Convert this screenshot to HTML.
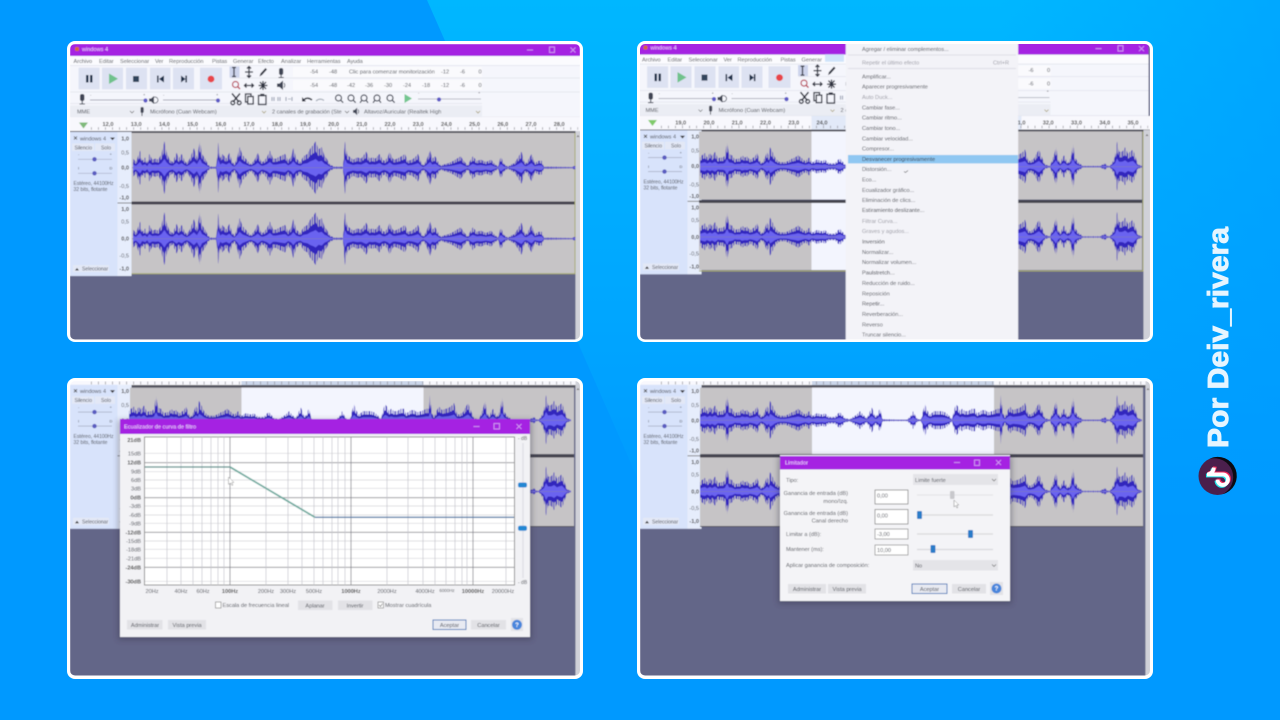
<!DOCTYPE html>
<html><head><meta charset="utf-8"><title>Audacity</title>
<style>
html,body{margin:0;padding:0;width:1280px;height:720px;overflow:hidden;background:#0099ff}
svg{display:block}
text{font-family:"Liberation Sans",sans-serif;font-size:5.6px;fill:#4d5058}
.g{fill:#9a9aa4}.d{fill:#33363f}.b{font-weight:bold;fill:#444}
.w{fill:#f3d9ff}
.s{fill:none;stroke:#2f3340;stroke-width:1.3}
</style></head><body>
<svg width="1280" height="720" viewBox="0 0 1280 720" xmlns="http://www.w3.org/2000/svg">
<defs>
<linearGradient id="bg" gradientUnits="userSpaceOnUse" x1="0" y1="0" x2="0" y2="520"><stop offset="0" stop-color="#00b7ff"/><stop offset=".6" stop-color="#00a6ff"/><stop offset="1" stop-color="#0099ff"/></linearGradient>
<linearGradient id="bg2" gradientUnits="userSpaceOnUse" x1="1000" y1="0" x2="1280" y2="0"><stop offset="0" stop-color="#0099ff" stop-opacity="0"/><stop offset="1" stop-color="#0099ff" stop-opacity=".5"/></linearGradient>
<filter id="b" x="0" y="0" width="1" height="1"><feGaussianBlur stdDeviation=".42"/></filter>
<filter id="sh" x="-10%" y="-10%" width="120%" height="120%"><feGaussianBlur stdDeviation="3"/></filter>
<clipPath id="c1"><rect x="70" y="44" width="510" height="295.500" rx="5"/></clipPath>
<clipPath id="c2"><rect x="640" y="44" width="510" height="295.500" rx="5"/></clipPath>
<clipPath id="c3"><rect x="70" y="381" width="510" height="294.500" rx="5"/></clipPath>
<clipPath id="c4"><rect x="640" y="381" width="510" height="294.500" rx="5"/></clipPath>
<pattern id="sp" patternUnits="userSpaceOnUse" x="0" y="0" width="17" height="100">
<path fill="#3325bd" d="M0 0h1.300v100H0zM2.400 0h.9v100h-.9zM4.500 0h1.600v100H4.500zM7.300 0h.8v100h-.8zM9.200 0h1.300v100H9.200zM11.700 0h.7v100h-.7zM13.400 0h1.500v100h-1.500zM15.900 0h.6v100h-.6z"/>
</pattern>

<path id="p1" transform="translate(60 0) scale(1.0142 1) translate(-60 0)" d="M132 0L132-8 135-5 137-10 139-15 141-6 144-9 146-4 148-12 151-7 154-8 157-7 160-12 163-23 165-14 168-7 171-5 175-13 177-8 180-12 183-6 185-4 188-8 192-17 195-9 198-23 200-12 203-8 206-3 208-1 214-1 216-22 218-8 220-12 224-8 227-13 230-5 232-3 235-10 237-18 240-11 243-8 246-5 248-3 252-7 255-13 258-6 260-5 264-9 267-15 270-8 273-8 277-10 282-12 285-6 288-10 290-17 293-8 297-5 300-10 304-12 307-17 310-20 312-23 315-16 318-18 321-10 323-8 326-3 330-1 339-1 341-23 343-12 345-10 349-7 353-9 357-8 362-14 365-8 368-9 371-8 375-12 378-7 380-6 383-9 385-14 388-8 390-7 395-9 400-12 403-6 407-7 410-9 413-12 416-5 418-2 421-6 425-15 427-8 430-10 433-5 435-2 439-3 443-4 448-6 455-10 458-6 462-2 465-7 467-10 471-6 475-7 480-5 485-7 489-3 492-1 494-8 495-9 498-3 502-1 505-3 508-4 511-8 515-14 518-5 520-4 523-9 525-12 528-4 532-6 535-6 537-1 565-.6 570-3 572 0Z"/>
<g id="W1">
<use href="#p1" fill="url(#sp)" transform="scale(1 1.15)"/><use href="#p1" fill="url(#sp)" transform="scale(1 -1.15)"/>
<use href="#p1" fill="#3325bd" transform="scale(1 .72)"/><use href="#p1" fill="#3325bd" transform="scale(1 -.72)"/>
<use href="#p1" fill="#6b64f0" transform="scale(1 .38)"/><use href="#p1" fill="#6b64f0" transform="scale(1 -.38)"/>
<rect x="132" y="-.4" width="444" height=".8" fill="#7a76c8"/>
</g>

<path id="p2" d="M700 0L700-8 702-10 705-12 707-8 710-12 712-9 715-13 718-7 720-8 723-8 725-10 727-21 729-11 732-10 735-6 737-7 740-7 742-10 745-8 747-9 750-6 752-7 755-9 757-12 760-5 762-3 765-8 767-13 769-9 770-17 773-12 775-8 778-5 780-4 785-4 788-5 792-7 795-8 798-10 801-8 805-5 807-6 809-8 811-5 813-4 816-6 818-6 822-5 825-6 829-3 832-3 835-3 838-6 840-7 843-4 845-2 850-1 853-3 855-4 858-6 860-8 864-4 867-2 870-8 872-11 875-4 877-4 879-9 880-10 882-3 883-1 897-.7 907-.7 911-4 913-8 916-3 918-1 921-1 923-8 925-14 927-9 930-5 934-8 938-8 942-8 945-7 948-5 950-3 952-1 954-9 956-14 958-12 960-8 962-10 965-8 968-8 972-10 975-10 977-6 979-7 982-9 985-9 988-7 992-8 995-9 997-10 1000-10 1001-22 1003-6 1005-3 1008-9 1010-12 1013-9 1017-10 1020-11 1023-13 1025-15 1028-6 1030-5 1034-7 1037-12 1039-15 1042-8 1045-2 1050-.7 1054-10 1056-17 1058-7 1060-3 1062-7 1064-10 1066-6 1068-3 1071-8 1073-20 1075-8 1078-4 1083-.7 1100-.7 1103-2 1105-3 1107-1 1110-.7 1113-5 1115-9 1117-22 1119-13 1122-13 1124-15 1125-17 1128-11 1130-13 1133-15 1136-7 1138-2 1142-.7 1142 0Z"/>
<g id="W2">
<use href="#p2" fill="url(#sp)" transform="scale(1 1.15)"/><use href="#p2" fill="url(#sp)" transform="scale(1 -1.1)"/>
<use href="#p2" fill="#3325bd" transform="scale(1 .72)"/><use href="#p2" fill="#3325bd" transform="scale(1 -.7)"/>
<use href="#p2" fill="#6b64f0" transform="scale(1 .38)"/><use href="#p2" fill="#6b64f0" transform="scale(1 -.38)"/>
<rect x="700" y="-.4" width="442" height=".8" fill="#7a76c8"/>
</g>

<g id="chrome">
<rect x="70" y="44" width="510" height="12" fill="#a521e2"/>
<rect x="75" y="47" width="4" height="4" rx="1" fill="#d8643c"/>
<text x="82" y="50.800" class="w">windows 4</text>
<path d="M527 50h6" stroke="#d9a8f2" stroke-width=".8"/><rect x="549.500" y="47" width="5" height="5.500" fill="none" stroke="#d9a8f2" stroke-width=".8"/><path d="M570.500 47.500l5 5m0-5l-5 5" stroke="#d9a8f2" stroke-width=".8"/>
<rect x="70" y="56" width="510" height="10" fill="#fbfbfe"/>
<text x="73.500" y="62.800">Archivo</text><text x="99" y="62.800">Editar</text><text x="120" y="62.800">Seleccionar</text><text x="155" y="62.800">Ver</text><text x="169" y="62.800">Reproducción</text><text x="212" y="62.800">Pistas</text><text x="233" y="62.800">Generar</text><text x="258" y="62.800">Efecto</text><text x="281" y="62.800">Analizar</text><text x="307" y="62.800">Herramientas</text><text x="347" y="62.800">Ayuda</text>
<rect x="70" y="65" width="510" height="52" fill="#f5f6fc"/>
<path d="M70 65.500H580M230 78H580M70 92H580M70 103.500H482M70 117H580" stroke="#e2e3ec" stroke-width=".7"/>
<g fill="#dde2f2"><rect x="78.600" y="67.700" width="21" height="21.600"/><rect x="102" y="67.700" width="21" height="21.600"/><rect x="126" y="67.700" width="21" height="21.600"/><rect x="150" y="67.700" width="20.500" height="21.600"/><rect x="173" y="67.700" width="21" height="21.600"/><rect x="200" y="67.700" width="22" height="21.600"/></g>
<path d="M86 75h2.500v7.500H86zM90 75h2.500v7.500H90z" fill="#1f2e48"/>
<path d="M109 73.500v10.500l9-5.200z" fill="#6fc28c"/>
<rect x="133" y="76" width="6" height="6" fill="#33445c"/>
<path d="M157 75.500h1.600v7H157zM164 75.500v7l-5-3.500z" fill="#1f2e48"/>
<path d="M187 75.500h-1.600v7h1.600zM181 75.500v7l4.500-3.500z" fill="#1f2e48"/>
<circle cx="211" cy="79" r="3.400" fill="#e84548"/>
<rect x="229.500" y="66.500" width="10" height="11" fill="#cdd4ec"/>
<path class="s" d="M232 67.500h4M232 76.500h4M234 67.500v9M249 66.500v11M245 72h8M247 68.500l2-2 2 2M247 75.500l2 2 2-2"/>
<path d="M259.500 76.500l1-3 5-5.500 1.500 1.500-5 5.500z" fill="#2f3340"/>
<circle cx="235.500" cy="84.500" r="3" fill="none" stroke="#b9485a" stroke-width="1.200"/><path d="M237.500 86.500l2.500 2.500" stroke="#b9485a" stroke-width="1.400"/>
<path class="s" d="M244.500 85.500h9M246.500 83.500l-2 2 2 2M251.500 83.500l2 2-2 2M263 81v9M258.500 85.500h9M260 82l6 7M266 82l-6 7"/>
<path d="M232 93.500l7 8.500M240 93.500l-7 8.500" fill="none" stroke="#2f3340" stroke-width="1.500"/><circle cx="232.800" cy="102.800" r="1.900" class="s"/><circle cx="239.200" cy="102.800" r="1.900" class="s"/>
<rect x="245.500" y="94" width="5.500" height="8" fill="none" stroke="#2f3340" stroke-width="1.300"/><rect x="247.800" y="96.500" width="5.400" height="7.500" fill="#f5f6fc" stroke="#2f3340" stroke-width="1.300"/>
<rect x="258.500" y="95.500" width="7.500" height="9" fill="none" stroke="#2f3340" stroke-width="1.300"/><rect x="260.300" y="93.800" width="4" height="2.400" fill="#2f3340"/>
<path d="M272 97v4M274 97v4M278 97v4M280 97v4M286 97v4M292 97v4" stroke="#9aa2b4" stroke-width="1.100"/><path d="M288 99h3" stroke="#b6bbc8"/>
<path d="M303 101q3.500-5 9-1" fill="none" stroke="#2f3340" stroke-width="1.600"/><path d="M302 97v4.500h4z" fill="#2f3340"/>
<path d="M316 101q4-3.500 8-.5" fill="none" stroke="#a6acb8" stroke-width="1.200"/>
<g fill="none" stroke="#3f4554" stroke-width="1.200"><circle cx="338.500" cy="98" r="3"/><path d="M340.700 100.200l2.500 2.500"/><circle cx="351" cy="98" r="3"/><path d="M353.200 100.200l2.500 2.500"/><circle cx="364" cy="98" r="3"/><path d="M362 100.200l-2 2.500M366 100.200l2 2.500"/><circle cx="377" cy="98" r="3"/><path d="M375 100.200l-2 2.500M379 100.200l2 2.500"/><circle cx="390" cy="98" r="3"/><path d="M392.200 100.200l2.500 2.500"/></g>
<path d="M404.500 94v9l7.500-4.500z" fill="#73c690"/>
<path d="M418 99h63" stroke="#a8aab6" stroke-width=".8"/><circle cx="439" cy="99.500" r="2.100" fill="#5b58c6"/>
<text x="418" y="94" style="font-size:4px">-</text><text x="478" y="94" style="font-size:4px">+</text>
<rect x="279" y="68" width="4.200" height="7" rx="2" fill="#3f4554"/><path d="M281.100 75v3M278.500 77.500h5.200" stroke="#3f4554" stroke-width="1"/>
<path d="M277 83.500h2.500l3.500-3v9.500l-3.500-3H277z" fill="#3f4554"/><path d="M284 83q1.700 2.200 0 4.500" fill="none" stroke="#3f4554" stroke-width=".8"/>
<rect x="293" y="67" width="189" height="10" fill="#fafafd"/><rect x="293" y="80" width="189" height="10" fill="#fafafd"/>
<g style="font-size:5px"><text x="310" y="73.500">-54</text><text x="329" y="73.500">-48</text><text x="349" y="73.500">Clic para comenzar monitorización</text><text x="441" y="73.500">-12</text><text x="460" y="73.500">-6</text><text x="478.500" y="73.500">0</text>
<text x="310" y="87">-54</text><text x="329" y="87">-48</text><text x="347" y="87">-42</text><text x="365" y="87">-36</text><text x="384" y="87">-30</text><text x="403" y="87">-24</text><text x="422" y="87">-18</text><text x="441" y="87">-12</text><text x="460" y="87">-6</text><text x="478.500" y="87">0</text></g>
<rect x="80" y="94" width="4.400" height="7" rx="2" fill="#3f4554"/><path d="M82.200 101v3M79.500 104h5.400" stroke="#3f4554" stroke-width="1"/>
<path d="M90 100h54M163 100h54" stroke="#a8aab6" stroke-width=".9"/><circle cx="145.500" cy="100.500" r="2.100" fill="#5b58c6"/><circle cx="218" cy="100.500" r="2.100" fill="#5b58c6"/>
<path d="M149 98.500h2l3-2.500v8l-3-2.500h-2z" fill="#3f4554"/><circle cx="155" cy="100" r="3" fill="none" stroke="#3f4554" stroke-width=".8"/>
<text x="90" y="96" style="font-size:4px">-</text><text x="143" y="96" style="font-size:4px">+</text><text x="163" y="96" style="font-size:4px">-</text><text x="216" y="96" style="font-size:4px">+</text>
<rect x="70" y="105.500" width="412" height="11" fill="#ebedf4"/>
<text x="77" y="113.500">MME</text><path d="M130 111l2 2 2-2" fill="none" stroke="#555" stroke-width=".6"/>
<rect x="140.500" y="107" width="3.200" height="6" rx="1.500" fill="#3f4554"/><path d="M142 113v3" stroke="#3f4554"/>
<text x="150" y="113.500">Micrófono (Cuan Webcam)</text><path d="M262 111l2 2 2-2" stroke="#a9a078" fill="none" stroke-width=".8"/>
<text x="272" y="113.500">2 canales de grabación (Ste</text><path d="M345 111l2 2 2-2" fill="none" stroke="#555" stroke-width=".6"/>
<path d="M353 110h1.600l2.500-2.400v7.600l-2.500-2.400H353z" fill="#3f4554"/><path d="M358 109.500q1.500 2 0 4" fill="none" stroke="#3f4554" stroke-width=".7"/>
<text x="364" y="113.500">Altavoz/Auricular (Realtek High</text><path d="M476 111l2 2 2-2" stroke="#a9a078" fill="none" stroke-width=".8"/>
</g>

<g id="tracks">
<rect x="70" y="132" width="47.500" height="144" fill="#d8e3fb"/>
<rect x="117.500" y="132" width="14" height="144" fill="#e6edfc"/>
<path d="M74 136.500l3 3m0-3l-3 3" stroke="#444" stroke-width=".8"/>
<text x="80" y="140.300">windows 4</text><path d="M110 137.500h5l-2.500 2.700z" fill="#333"/>
<rect x="72" y="143.500" width="22" height="7.500" fill="#e3e8f6"/><rect x="95" y="143.500" width="20" height="7.500" fill="#e3e8f6"/>
<text x="74.500" y="149.300" style="font-size:5px">Silencio</text><text x="101" y="149.300" style="font-size:5px">Solo</text>
<path d="M78 159.300h34M78 173.300h34" stroke="#a6acc0" stroke-width=".7"/><circle cx="94.500" cy="159.300" r="2.200" fill="#5a5cc0"/><circle cx="94.500" cy="173.300" r="2.200" fill="#5a5cc0"/>
<text x="78" y="155.500" style="font-size:4px">-</text><text x="109.500" y="155.500" style="font-size:4px">+</text><text x="78" y="169.500" style="font-size:4px">I</text><text x="109.500" y="169.500" style="font-size:4px">D</text>
<text x="73.500" y="185.200" style="font-size:5px">Estéreo, 44100Hz</text><text x="73.500" y="191.200" style="font-size:5px">32 bits, flotante</text>
<rect x="73" y="265" width="36" height="7" fill="#e3e8f6"/><path d="M75 270.500h4l-2-2.500z" fill="#333"/><text x="82" y="270.500" style="font-size:5px">Seleccionar</text>
<g style="font-size:5.400px"><text x="129" y="140.300" text-anchor="end" class="b">1,0</text><text x="129" y="154.300" text-anchor="end">0,5</text><text x="129" y="169.700" text-anchor="end" class="b">0,0</text><text x="129" y="188" text-anchor="end">-0,5</text><text x="129" y="199.700" text-anchor="end" class="b">-1,0</text><text x="129" y="211" text-anchor="end" class="b">1,0</text><text x="129" y="223.700" text-anchor="end">0,5</text><text x="129" y="240.700" text-anchor="end" class="b">0,0</text><text x="129" y="257.300" text-anchor="end">-0,5</text><text x="129" y="270.300" text-anchor="end" class="b">-1,0</text></g>
<path d="M117.500 203h14" stroke="#666" stroke-width=".8"/>
</g>
</defs>

<rect width="1280" height="720" fill="#0099ff"/>
<polygon points="427,0 1280,0 1280,720 744,720" fill="url(#bg)"/>
<polygon points="1000,0 1280,0 1280,720 1000,720" fill="url(#bg2)"/>

<!-- PANEL 1 -->
<rect x="67" y="41" width="516" height="301" rx="8" fill="#fff"/>
<g clip-path="url(#c1)"><g filter="url(#b)">
<rect x="70" y="44" width="510" height="296" fill="#646688"/>
<use href="#chrome"/>
<rect x="70" y="117" width="510" height="15" fill="#f8f8fd"/>
<path d="M79 122.500h9l-4.500 6z" fill="#7fba7a"/>
<path d="M91 128.500H578" stroke="#8a8a92" stroke-width="2.500" stroke-dasharray=".7 6.350"/>
<g><text x="108" y="126" text-anchor="middle" class="b">12,0</text><text x="136.200" y="126" text-anchor="middle" class="b">13,0</text><text x="164.400" y="126" text-anchor="middle" class="b">14,0</text><text x="192.600" y="126" text-anchor="middle" class="b">15,0</text><text x="220.800" y="126" text-anchor="middle" class="b">16,0</text><text x="249" y="126" text-anchor="middle" class="b">17,0</text><text x="277.200" y="126" text-anchor="middle" class="b">18,0</text><text x="305.400" y="126" text-anchor="middle" class="b">19,0</text><text x="333.600" y="126" text-anchor="middle" class="b">20,0</text><text x="361.800" y="126" text-anchor="middle" class="b">21,0</text><text x="390" y="126" text-anchor="middle" class="b">22,0</text><text x="418.200" y="126" text-anchor="middle" class="b">23,0</text><text x="446.400" y="126" text-anchor="middle" class="b">24,0</text><text x="474.600" y="126" text-anchor="middle" class="b">25,0</text><text x="502.800" y="126" text-anchor="middle" class="b">26,0</text><text x="531" y="126" text-anchor="middle" class="b">27,0</text><text x="559.200" y="126" text-anchor="middle" class="b">28,0</text></g>
<rect x="70" y="131" width="510" height="2" fill="#55555f"/>
<use href="#tracks"/>
<rect x="131.500" y="133" width="443" height="68.500" fill="#c6c4c6"/>
<rect x="131.500" y="204.500" width="443" height="69" fill="#c6c4c6"/>
<rect x="131.500" y="201.500" width="443" height="3" fill="#444450"/>
<path d="M131.500 273.800H575V133" fill="none" stroke="#a8ab6c" stroke-width="1"/>
<use href="#W1" y="167.700"/><use href="#W1" y="238.700"/>
<rect x="575.500" y="131" width="5" height="209" fill="#d0d1d8"/><path d="M576.500 137l1.500-2 1.500 2z" fill="#777"/>
</g></g>

<!-- PANEL 2 -->
<rect x="637" y="41" width="516" height="301" rx="8" fill="#fff"/>
<g clip-path="url(#c2)"><g filter="url(#b)">
<rect x="640" y="44" width="510" height="296" fill="#646688"/>
<g transform="translate(568.500 -1.400)"><use href="#chrome"/></g>
<rect x="640" y="116" width="510" height="15" fill="#f8f8fd"/>
<rect x="811.500" y="116" width="210" height="15" fill="#e2e9f8"/>
<path d="M648 120h9l-4.500 6z" fill="#7fca6a"/>
<path d="M661 127H1148" stroke="#8a8a92" stroke-width="2.500" stroke-dasharray=".7 6.350"/>
<g><text x="680.700" y="124.600" text-anchor="middle" class="b">19,0</text><text x="709" y="124.600" text-anchor="middle" class="b">20,0</text><text x="737.200" y="124.600" text-anchor="middle" class="b">21,0</text><text x="765.500" y="124.600" text-anchor="middle" class="b">22,0</text><text x="793.800" y="124.600" text-anchor="middle" class="b">23,0</text><text x="822" y="124.600" text-anchor="middle" class="b">24,0</text><text x="1020" y="124.600" text-anchor="middle" class="b">31,0</text><text x="1048.200" y="124.600" text-anchor="middle" class="b">32,0</text><text x="1076.500" y="124.600" text-anchor="middle" class="b">33,0</text><text x="1104.800" y="124.600" text-anchor="middle" class="b">34,0</text><text x="1133" y="124.600" text-anchor="middle" class="b">35,0</text></g>
<rect x="640" y="129.500" width="510" height="2" fill="#55555f"/>
<g transform="translate(570 -1.700)"><use href="#tracks"/></g>
<rect x="699" y="131.500" width="443" height="68" fill="#c6c4c6"/>
<rect x="699" y="203" width="443" height="67" fill="#c6c4c6"/>
<rect x="811.500" y="131.500" width="182" height="68" fill="#f3f5fe"/><rect x="811.500" y="203" width="182" height="67" fill="#f3f5fe"/>
<rect x="699" y="200" width="443" height="3" fill="#444450"/>
<path d="M699 271H1143V131.500" fill="none" stroke="#a8ab6c" stroke-width="1"/>
<use href="#W2" y="166.700"/><use href="#W2" y="237"/>
<rect x="1143.500" y="130" width="7" height="210" fill="#d0d1d8"/><path d="M1145.500 136l1.500-2 1.500 2z" fill="#777"/>
<rect x="825" y="54.300" width="19" height="7.500" fill="#cfe4fa"/>
<rect x="845.700" y="40" width="172.500" height="300" fill="#f3f3f8"/>
<path d="M848 55H1016M848 68.500H1016" stroke="#d8d8e0" stroke-width=".7"/>
<rect x="848" y="155" width="170" height="8.400" fill="#8fc7f2"/>
<g><text x="862" y="51">Agregar / eliminar complementos...</text><text x="862" y="64.700" class="g">Repetir el último efecto</text><text x="993" y="64.700" class="g">Ctrl+R</text>
<text x="862" y="78.300">Amplificar...</text><text x="862" y="88.700">Aparecer progresivamente</text><text x="862" y="99" class="g">Auto Duck...</text><text x="862" y="109.300">Cambiar fase...</text><text x="862" y="119.700">Cambiar ritmo...</text><text x="862" y="130">Cambiar tono...</text><text x="862" y="140.300">Cambiar velocidad...</text><text x="862" y="150.700">Compresor...</text><text x="862" y="161" class="d">Desvanecer progresivamente</text><text x="862" y="171">Distorsión...</text><text x="862" y="181.700">Eco...</text><text x="862" y="192">Ecualizador gráfico...</text><text x="862" y="202">Eliminación de clics...</text><text x="862" y="212" class="d">Estiramiento deslizante...</text><text x="862" y="223" class="g">Filtrar Curva...</text><text x="862" y="233" class="g">Graves y agudos...</text><text x="862" y="243.700" class="d">Inversión</text><text x="862" y="254">Normalizar...</text><text x="862" y="264">Normalizar volumen...</text><text x="862" y="274.700" class="d">Paulstretch...</text><text x="862" y="285">Reducción de ruido...</text><text x="862" y="295.300">Reposición</text><text x="862" y="305.700" class="d">Repetir...</text><text x="862" y="316">Reverberación...</text><text x="862" y="326.300">Reverso</text><text x="862" y="336.700">Truncar silencio...</text></g>
<path d="M904 171.500l1.500 1 2.500-2" fill="none" stroke="#555" stroke-width=".7"/>
</g></g>

<!-- PANEL 3 -->
<rect x="67" y="378" width="516" height="301" rx="8" fill="#fff"/>
<g clip-path="url(#c3)"><g filter="url(#b)">
<rect x="70" y="381" width="510" height="296" fill="#646688"/>
<rect x="70" y="381" width="510" height="4" fill="#f8f8fd"/><rect x="241.500" y="381" width="182" height="4" fill="#cbd6ea"/>
<path d="M91 383H578" stroke="#8a8a92" stroke-width="3" stroke-dasharray=".7 6.350"/>
<rect x="70" y="385" width="510" height="2.700" fill="#55555f"/>
<g transform="translate(0 252.800)"><use href="#tracks"/></g>
<rect x="130" y="387.700" width="444" height="66.500" fill="#c6c4c6"/>
<rect x="130" y="457.500" width="444" height="68.500" fill="#c6c4c6"/>
<rect x="241.500" y="387.700" width="182" height="66.500" fill="#f3f5fe"/>
<rect x="130" y="454.200" width="444" height="3.300" fill="#444450"/>
<path d="M130 526.500H574" stroke="#55555f" stroke-width="1"/>
<g transform="translate(-571 0)"><use href="#W2" y="420.300"/><use href="#W2" y="491.500"/></g>
<rect x="575.500" y="381" width="5" height="296" fill="#d0d1d8"/><path d="M576.500 390l1.500-2 1.500 2z" fill="#777"/>
<rect x="118" y="420" width="414" height="220" fill="#2a2a40" opacity=".35" filter="url(#sh)"/>
<rect x="120" y="419" width="410" height="218" fill="#f2f2f5"/>
<rect x="120" y="419" width="410" height="15" fill="#a521e2"/>
<text x="124" y="428.500" class="w">Ecualizador de curva de filtro</text>
<path d="M473.500 426.500h6" stroke="#d9a8f2" stroke-width=".8"/><rect x="494" y="423.500" width="5.500" height="5.500" fill="none" stroke="#d9a8f2" stroke-width=".8"/><path d="M516.500 424l5 5m0-5l-5 5" stroke="#d9a8f2" stroke-width=".8"/>
<rect x="144.500" y="437" width="370" height="148" fill="#fff" stroke="#777" stroke-width=".8"/>
<path d="M145 453.300H514M145 471.700H514M145 480H514M145 488.300H514M145 506H514M145 515H514M145 523.300H514M145 541H514M145 549.300H514M145 558.300H514M145 581.300H514" stroke="#d4d4d8" stroke-width=".7"/>
<path d="M145 462.700H514M145 497.700H514M145 532.300H514M145 567.300H514" stroke="#8c8c92" stroke-width=".8"/>
<path d="M167 437V585M181 437V585M193 437V585M202 437V585M211 437V585M218 437V585M224 437V585M266 437V585M288 437V585M302 437V585M314 437V585M323 437V585M332 437V585M338 437V585M345 437V585M387 437V585M408 437V585M423 437V585M435 437V585M446 437V585M455 437V585M462 437V585M467 437V585M506 437V585" stroke="#c6c6cc" stroke-width=".7"/>
<path d="M230 437V585M351 437V585M473 437V585" stroke="#85858c" stroke-width=".8"/>
<path d="M145 467H230" stroke="#4f8a86" stroke-width="1.300"/><path d="M230 467L315 517.300" stroke="#6aa89c" stroke-width="1.700"/><path d="M315 517.300H514" stroke="#5a80aa" stroke-width="1.300"/>
<path d="M228.500 477v7.500l2-1.500 1.500 2.500 1-.5-1.300-2.300 2.300-.3z" fill="#fff" stroke="#888" stroke-width=".5"/>
<g style="font-size:5.400px"><text x="141" y="442" text-anchor="end" class="b">21dB</text><text x="141" y="455.300" text-anchor="end">15dB</text><text x="141" y="464.700" text-anchor="end" class="b">12dB</text><text x="141" y="473.700" text-anchor="end">9dB</text><text x="141" y="482" text-anchor="end">6dB</text><text x="141" y="490.300" text-anchor="end">3dB</text><text x="141" y="499.700" text-anchor="end" class="b">0dB</text><text x="141" y="508" text-anchor="end">-3dB</text><text x="141" y="517" text-anchor="end">-6dB</text><text x="141" y="525.300" text-anchor="end">-9dB</text><text x="141" y="534.300" text-anchor="end" class="b">-12dB</text><text x="141" y="543" text-anchor="end">-15dB</text><text x="141" y="551.300" text-anchor="end">-18dB</text><text x="141" y="560.300" text-anchor="end">-21dB</text><text x="141" y="569.300" text-anchor="end" class="b">-24dB</text><text x="141" y="583.300" text-anchor="end" class="b">-30dB</text></g>
<g style="font-size:5.200px"><text x="152" y="593" text-anchor="middle">20Hz</text><text x="181" y="593" text-anchor="middle">40Hz</text><text x="203" y="593" text-anchor="middle">60Hz</text><text x="230" y="593" text-anchor="middle" class="b">100Hz</text><text x="266" y="593" text-anchor="middle">200Hz</text><text x="288" y="593" text-anchor="middle">300Hz</text><text x="314" y="593" text-anchor="middle">500Hz</text><text x="351" y="593" text-anchor="middle" class="b">1000Hz</text><text x="387" y="593" text-anchor="middle">2000Hz</text><text x="425" y="593" text-anchor="middle">4000Hz</text><text x="447" y="592" text-anchor="middle" style="font-size:4.400px">6000Hz</text><text x="473" y="593" text-anchor="middle" class="b">10000Hz</text><text x="503" y="593" text-anchor="middle">20000Hz</text></g>
<text x="518" y="440" style="font-size:5px">- dB</text><text x="518" y="584" style="font-size:5px">- dB</text>
<path d="M523 443V578" stroke="#e0e0e6" stroke-width="1.500"/>
<rect x="518" y="482.500" width="9" height="5" rx="2" fill="#2187d3"/><rect x="518" y="525.800" width="9" height="5" rx="2" fill="#2187d3"/>
<rect x="215.500" y="602" width="5.500" height="6" fill="#fff" stroke="#777" stroke-width=".6"/><text x="222.500" y="607">Escala de frecuencia lineal</text>
<rect x="298" y="600.500" width="34.500" height="9.500" fill="#e2e2e6"/><text x="315" y="607.300" text-anchor="middle">Aplanar</text>
<rect x="338" y="600.500" width="34.500" height="9.500" fill="#e2e2e6"/><text x="355" y="607.300" text-anchor="middle">Invertir</text>
<rect x="378" y="602" width="5.500" height="6" fill="#fff" stroke="#777" stroke-width=".6"/><path d="M379 605l1.500 1.500 2-3" fill="none" stroke="#555" stroke-width=".6"/><text x="385" y="607">Mostrar cuadrícula</text>
<rect x="127" y="620" width="35.500" height="9.500" fill="#e2e2e6"/><text x="145" y="626.800" text-anchor="middle">Administrar</text>
<rect x="168" y="620" width="38" height="9.500" fill="#e2e2e6"/><text x="187" y="626.800" text-anchor="middle">Vista previa</text>
<rect x="433" y="620" width="33" height="9.500" fill="#e8eaf2" stroke="#3d74b8" stroke-width=".9"/><text x="449.500" y="626.800" text-anchor="middle">Aceptar</text>
<rect x="471" y="620" width="35" height="9.500" fill="#e2e2e6"/><text x="488.500" y="626.800" text-anchor="middle">Cancelar</text>
<rect x="511" y="618" width="12" height="13" fill="#e2e2e6"/><circle cx="517" cy="624.800" r="5" fill="#4a86dc"/><text x="517" y="627" text-anchor="middle" style="fill:#fff;font-size:6px;font-weight:bold">?</text>
</g></g>

<!-- PANEL 4 -->
<rect x="637" y="378" width="516" height="301" rx="8" fill="#fff"/>
<g clip-path="url(#c4)"><g filter="url(#b)">
<rect x="640" y="381" width="510" height="296" fill="#646688"/>
<rect x="640" y="381" width="510" height="4" fill="#f8f8fd"/><rect x="812" y="381" width="182" height="4" fill="#cbd6ea"/>
<path d="M661 383H1148" stroke="#8a8a92" stroke-width="3" stroke-dasharray=".7 6.350"/>
<rect x="640" y="385" width="510" height="2.700" fill="#55555f"/>
<g transform="translate(570 252.800)"><use href="#tracks"/></g>
<rect x="700" y="387.700" width="443" height="66.500" fill="#c6c4c6"/>
<rect x="700" y="457.500" width="443" height="68.500" fill="#c6c4c6"/>
<rect x="812" y="387.700" width="182" height="66.500" fill="#f3f5fe"/>
<rect x="700" y="454.200" width="443" height="3.300" fill="#444450"/>
<path d="M700 526.500H1143" stroke="#55555f" stroke-width="1"/>
<use href="#W2" y="420.300"/><use href="#W2" y="491.500"/>
<rect x="1145.500" y="381" width="5" height="296" fill="#d0d1d8"/><path d="M1146.500 390l1.500-2 1.500 2z" fill="#777"/>
<rect x="778" y="456" width="234" height="148" fill="#2a2a40" opacity=".35" filter="url(#sh)"/>
<rect x="780" y="455" width="230" height="146" fill="#f4f4f7"/>
<rect x="780" y="456" width="230" height="13.500" fill="#a521e2"/>
<text x="785" y="464.700" class="w">Limitador</text>
<path d="M954 462.500h6" stroke="#d9a8f2" stroke-width=".8"/><rect x="974.500" y="460" width="5" height="5.500" fill="none" stroke="#d9a8f2" stroke-width=".8"/><path d="M996 460l5 5m0-5l-5 5" stroke="#d9a8f2" stroke-width=".8"/>
<text x="786" y="482">Tipo:</text>
<rect x="913" y="474" width="85" height="11" fill="#e4e4e8"/><text x="915" y="482">Limite fuerte</text><path d="M992 479l2 2 2-2" fill="none" stroke="#555" stroke-width=".6"/>
<text x="848" y="495" text-anchor="end">Ganancia de entrada (dB)</text><text x="848" y="503" text-anchor="end">mono/Izq.</text>
<rect x="875" y="490" width="33" height="14" fill="#fff" stroke="#777" stroke-width=".7"/><text x="877" y="497.500">0,00</text>
<path d="M917 495H993" stroke="#e4e4e8" stroke-width="1.200"/><rect x="950" y="491" width="4.500" height="8" rx="1" fill="#c8c8cc"/>
<path d="M954 500v7l1.600-1.500 1.300 2.500 1-.5-1.200-2.400 2.200-.2z" fill="#fff" stroke="#777" stroke-width=".5"/>
<text x="848" y="515" text-anchor="end">Ganancia de entrada (dB)</text><text x="848" y="522.500" text-anchor="end">Canal derecho</text>
<rect x="875" y="509.500" width="33" height="14.500" fill="#fff" stroke="#777" stroke-width=".7"/><text x="877" y="517.500">0,00</text>
<path d="M917 515H993" stroke="#d8d8dc" stroke-width="1.200"/><rect x="917" y="511" width="5" height="8" rx="1" fill="#2b7bc8"/>
<text x="786" y="536">Limitar a (dB):</text>
<rect x="875" y="529" width="33" height="10" fill="#fff" stroke="#888" stroke-width=".7"/><text x="877" y="536.200">-3,00</text>
<path d="M917 534H993" stroke="#d8d8dc" stroke-width="1.200"/><rect x="968" y="530" width="5" height="8" rx="1" fill="#2b7bc8"/>
<text x="786" y="551.200">Mantener (ms):</text>
<rect x="875" y="545" width="33" height="10" fill="#fff" stroke="#888" stroke-width=".7"/><text x="877" y="552">10,00</text>
<path d="M917 549.500H993" stroke="#d8d8dc" stroke-width="1.200"/><rect x="930.500" y="545" width="5" height="8" rx="1" fill="#2b7bc8"/>
<text x="786" y="567">Aplicar ganancia de composición:</text>
<rect x="913" y="560" width="85" height="10.500" fill="#e4e4e8"/><text x="915" y="567.300">No</text><path d="M992 564.500l2 2 2-2" fill="none" stroke="#555" stroke-width=".6"/>
<rect x="788" y="584" width="38" height="9.500" fill="#e2e2e6"/><text x="807" y="590.800" text-anchor="middle">Administrar</text>
<rect x="828" y="584" width="38" height="9.500" fill="#e2e2e6"/><text x="847" y="590.800" text-anchor="middle">Vista previa</text>
<rect x="912" y="584" width="35" height="9.500" fill="#e8eaf2" stroke="#3d74b8" stroke-width=".9"/><text x="929.500" y="590.800" text-anchor="middle">Aceptar</text>
<rect x="952" y="584" width="34" height="9.500" fill="#e2e2e6"/><text x="969" y="590.800" text-anchor="middle">Cancelar</text>
<rect x="990" y="582" width="13" height="13" fill="#e2e2e6"/><circle cx="996.500" cy="588.500" r="5" fill="#4a86dc"/><text x="996.500" y="590.700" text-anchor="middle" style="fill:#fff;font-size:6px;font-weight:bold">?</text>
</g></g>

<!-- brand -->
<text transform="translate(1228 448) rotate(-90)" textLength="221" lengthAdjust="spacingAndGlyphs" style="font-size:29px;font-weight:bold;fill:#e6f5ff;stroke:#e6f5ff;stroke-width:.9px">Por Deiv_rivera</text>
<g transform="translate(1217.500 476)">
<circle r="19" fill="#4a1f4c"/>
<path d="M-8 -17.200A19 19 0 1 1 5 18.300 19 19 0 0 0 -8 -17.200Z" fill="#0b0b12"/>
<g transform="rotate(-90) scale(1.050)" fill="none" stroke-width="3.600" stroke-linecap="butt">
<g stroke="#25e3e6" transform="translate(-1 -1)"><path d="M1.500-10V5a5 5 0 1 1-5-5"/><path d="M1.500-9.500q1 5.500 6.500 6"/></g>
<g stroke="#f22c5e" transform="translate(1 1)"><path d="M1.500-10V5a5 5 0 1 1-5-5"/><path d="M1.500-9.500q1 5.500 6.500 6"/></g>
<g stroke="#fff"><path d="M1.500-10V5a5 5 0 1 1-5-5"/><path d="M1.500-9.500q1 5.500 6.500 6"/></g>
</g>
</g>
</svg>
</body></html>
